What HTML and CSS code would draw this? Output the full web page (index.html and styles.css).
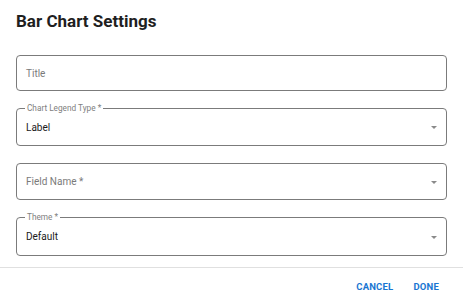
FILE: index.html
```html
<!DOCTYPE html>
<html>
<head>
<meta charset="utf-8">
<link rel="stylesheet" href="styles.css">
</head>
<body>
<div class="dialog">
  <h2 class="dialog-title">Bar Chart Settings</h2>
  <div class="dialog-content">
    <div class="field">
      <fieldset class="outline"><legend class="notch empty"></legend></fieldset>
      <span class="placeholder">Title</span>
    </div>
    <div class="field select labeled">
      <fieldset class="outline"><legend class="notch">Chart Legend Type *</legend></fieldset>
      <span class="value">Label</span>
      <span class="arrow"></span>
    </div>
    <div class="field select">
      <fieldset class="outline"><legend class="notch empty"></legend></fieldset>
      <span class="placeholder">Field Name *</span>
      <span class="arrow"></span>
    </div>
    <div class="field select labeled tall">
      <fieldset class="outline"><legend class="notch">Theme *</legend></fieldset>
      <span class="value">Default</span>
      <span class="arrow"></span>
    </div>
  </div>
  <div class="dialog-actions">
    <button class="btn">CANCEL</button>
    <button class="btn">DONE</button>
  </div>
</div>
</body>
</html>
```
FILE: styles.css
```css
html, body {
  margin: 0;
  padding: 0;
  background: #ffffff;
}
body {
  font-family: Roboto, "Liberation Sans", sans-serif;
  width: 463px;
  height: 305px;
  overflow: hidden;
}
.dialog {
  display: flex;
  flex-direction: column;
  width: 463px;
}
.dialog-title {
  margin: 0;
  padding: 9px 16px 0;
  height: 46px;
  box-sizing: border-box;
  font-size: 17px;
  font-weight: 700;
  color: #1f1f1f;
  line-height: 24px;
}
.dialog-content {
  display: flex;
  flex-direction: column;
  gap: 17px;
  padding: 9px 16px 0;
  height: 222px;
  box-sizing: border-box;
  border-bottom: 1px solid #e0e0e0;
}
.field {
  position: relative;
  height: 36px;
  display: flex;
  align-items: center;
  padding: 0 10px;
  font-size: 10px;
  flex: none;
}
.field.labeled {
  height: 38px;
}
.field.select:not(.labeled) {
  height: 37px;
}
.field.tall {
  height: 39px;
}
.outline {
  position: absolute;
  top: -5px;
  left: 0;
  right: 0;
  bottom: 0;
  margin: 0;
  padding: 0 8px;
  border: 1px solid #7b7b7b;
  border-radius: 4px;
  pointer-events: none;
  min-width: 0;
}
.notch {
  padding: 0 2px;
  height: 10px;
  font-size: 8.25px;
  line-height: 10px;
  color: #808080;
  font-weight: 400;
}
.notch.empty {
  padding: 0;
  width: 0;
}
.placeholder {
  color: #7a7a7a;
}
.value {
  color: #1a1a1a;
}
.arrow {
  position: absolute;
  right: 10px;
  top: 50%;
  margin-top: -1px;
  width: 0;
  height: 0;
  border-left: 3.5px solid transparent;
  border-right: 3.5px solid transparent;
  border-top: 3.5px solid #8a8a8a;
}
.dialog-actions {
  display: flex;
  justify-content: flex-end;
  align-items: center;
  gap: 4px;
  padding: 0 16px 0 0;
  height: 37px;
}
.btn {
  background: none;
  border: none;
  padding: 4px 8px;
  font-family: Roboto, "Liberation Sans", sans-serif;
  font-size: 9.5px;
  font-weight: 700;
  color: #1976d2;
  letter-spacing: 0.2px;
}
```
